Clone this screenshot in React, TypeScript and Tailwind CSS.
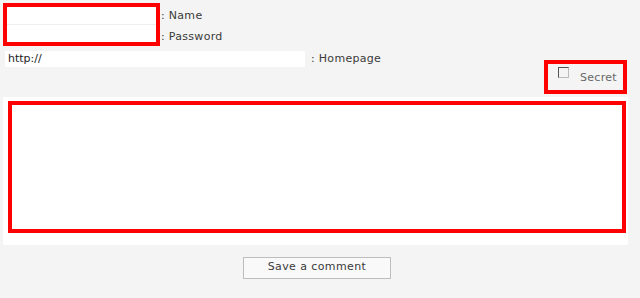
import React from "react";

export default function App() {
  const font = { fontFamily: '"DejaVu Sans", Verdana, sans-serif' };
  return (
    <div className="w-[640px] h-[298px] bg-[#f4f4f4] text-[11px] text-[#3a3a3a]" style={font}>
      <div className="flex pl-[3px] pt-[3px]">
        <div className="w-[157px] h-[43px] border-[4px] border-[#ff0000] flex flex-col bg-white">
          <input className="h-[18px] w-full bg-white border-b border-[#eeeeee] outline-none" />
          <input className="h-[15px] w-full bg-white outline-none" />
        </div>
        <div className="flex flex-col pl-[1px] pt-[2px] leading-[21px] tracking-[0.3px]">
          <span>: Name</span>
          <span>: Password</span>
        </div>
      </div>
      <div className="flex items-center pl-[5px] mt-[4px]">
        <div className="w-[300px] h-[16px] bg-white pl-[3px] leading-[16px] text-[#222]">http://</div>
        <span className="ml-[6px] tracking-[0.3px]">: Homepage</span>
      </div>
      <div className="flex justify-end pr-[13px] mt-[-8px]">
        <div className="w-[83px] h-[34px] border-[4px] border-[#ff0000] flex items-center pl-[10px]">
          <span className="w-[11px] h-[11px] border border-[#555] border-r-[#bbb] border-b-[#bbb] bg-[#f4f4f4] mt-[-8px]" />
          <span className="ml-[11px] text-[#666] tracking-[0.3px] mt-[3px]">Secret</span>
        </div>
      </div>
      <div className="ml-[3px] mt-[3px] w-[625px] h-[148px] bg-white pl-[5px] pt-[4px]">
        <div className="w-[618px] h-[132px] border-[4px] border-[#ff0000]" />
      </div>
      <div className="pl-[243px] mt-[12px]">
        <button className="w-[148px] h-[22px] border border-[#bdbdbd] bg-[#f9f9f9] text-[#3a3a3a] text-[11px] tracking-[0.4px]" style={font}>
          Save a comment
        </button>
      </div>
    </div>
  );
}
